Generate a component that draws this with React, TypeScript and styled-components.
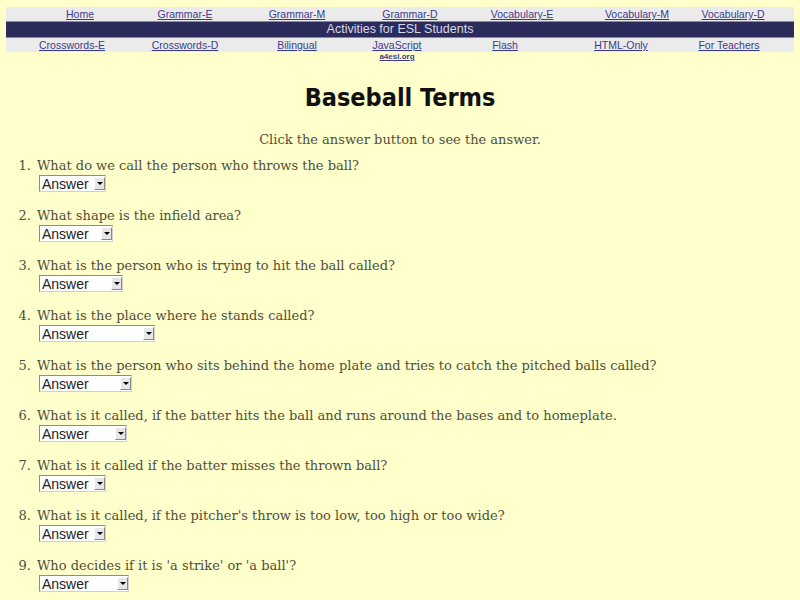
import React from 'react'
import styled, { createGlobalStyle } from 'styled-components'

const GlobalStyle = createGlobalStyle`
  html, body {
    margin: 0;
    padding: 0;
    background: #ffffcc;
  }
  body {
    font-family: 'Liberation Sans', Arial, sans-serif;
  }
`

const Page = styled.div`
  width: 800px;
  height: 600px;
  overflow: hidden;
  background: #ffffcc;
  padding: 7px 6px 0;
  box-sizing: border-box;
`

const NavTable = styled.div`
  display: flex;
  flex-direction: column;
`

const LinkRow = styled.div<{ $cols: string }>`
  display: grid;
  grid-template-columns: ${(p) => p.$cols};
  background: #ebebeb;
  height: 14px;
  align-items: center;
`

const NavCell = styled.div`
  display: flex;
  justify-content: center;
  min-width: 0;
  white-space: nowrap;
`

const NavLink = styled.a`
  font-size: 10.5px;
  color: #3b3b8c;
  text-decoration: underline;
  line-height: 14px;
`

const Banner = styled.div`
  background: #2c2c5c;
  color: #d8d8e8;
  height: 15px;
  font-size: 12.5px;
  line-height: 15px;
  text-align: center;
  border-top: 1px solid #8a8aa8;
  border-bottom: 1px solid #8a8aa8;
`

const SubLink = styled.div<{ $cols: string }>`
  display: grid;
  grid-template-columns: ${(p) => p.$cols};
  height: 10px;
`

const SmallLink = styled.a`
  grid-column: 4;
  text-align: center;
  font-size: 8px;
  font-weight: bold;
  color: #3b3b8c;
  text-decoration: underline;
  line-height: 10px;
`

const Title = styled.h1`
  margin: 21px 0 0;
  text-align: center;
  font-family: 'DejaVu Sans Condensed', 'DejaVu Sans', sans-serif;
  font-weight: bold;
  font-size: 25px;
  color: #111;
  line-height: 30px;
`

const Intro = styled.p`
  margin: 19px 0 0;
  text-align: center;
  font-family: 'DejaVu Serif', serif;
  font-size: 13px;
  color: #4f4f3c;
  line-height: 16px;
`

const Questions = styled.div`
  margin-top: 9px;
  display: flex;
  flex-direction: column;
  gap: 15px;
  font-family: 'DejaVu Serif', serif;
  font-size: 13px;
  color: #4f4f3c;
`

const Item = styled.div`
  display: flex;
  line-height: 17px;
`

const Num = styled.span`
  width: 25px;
  flex: none;
  text-align: right;
  padding-right: 6px;
`

const Body = styled.div`
  display: flex;
  flex-direction: column;
  align-items: flex-start;
`

const SelectWrap = styled.span<{ $w: number }>`
  position: relative;
  display: inline-block;
  width: ${(p) => p.$w}px;
  height: 17px;
  margin-top: 1px;
  margin-left: 2px;
`

const Select = styled.select`
  appearance: none;
  -webkit-appearance: none;
  width: 100%;
  height: 100%;
  box-sizing: border-box;
  border: 1px solid #8c8c8c;
  border-right-color: #d0d0d0;
  border-bottom-color: #d0d0d0;
  background: #fff;
  font-family: 'Liberation Sans', Arial, sans-serif;
  font-size: 14px;
  color: #222;
  padding: 0 0 0 2px;
  margin: 0;
  border-radius: 0;
  outline: none;
`

const Arrow = styled.span`
  position: absolute;
  right: 1px;
  top: 2px;
  width: 11px;
  height: 13px;
  background: #e6e6e6;
  border: 1px solid #fff;
  border-right-color: #888;
  border-bottom-color: #888;
  box-sizing: border-box;
  display: flex;
  align-items: center;
  justify-content: center;
  pointer-events: none;

  &::after {
    content: '';
    border-left: 3px solid transparent;
    border-right: 3px solid transparent;
    border-top: 3px solid #000;
  }
`

const topCols = '148px 62px 162px 64px 160px 70px 122px'
const bottomCols = '132px 94px 130px 70px 146px 86px 130px'

const topLinks = ['Home', 'Grammar-E', 'Grammar-M', 'Grammar-D', 'Vocabulary-E', 'Vocabulary-M', 'Vocabulary-D']
const bottomLinks = ['Crosswords-E', 'Crosswords-D', 'Bilingual', 'JavaScript', 'Flash', 'HTML-Only', 'For Teachers']

const questions = [
  { q: 'What do we call the person who throws the ball?', w: 67 },
  { q: 'What shape is the infield area?', w: 74 },
  { q: 'What is the person who is trying to hit the ball called?', w: 84 },
  { q: 'What is the place where he stands called?', w: 116 },
  { q: 'What is the person who sits behind the home plate and tries to catch the pitched balls called?', w: 93 },
  { q: 'What is it called, if the batter hits the ball and runs around the bases and to homeplate.', w: 88 },
  { q: 'What is it called if the batter misses the thrown ball?', w: 67 },
  { q: "What is it called, if the pitcher's throw is too low, too high or too wide?", w: 67 },
  { q: "Who decides if it is 'a strike' or 'a ball'?", w: 90 },
]

const App: React.FC = () => {
  return (
    <>
      <GlobalStyle />
      <Page>
        <NavTable>
          <LinkRow $cols={topCols}>
            {topLinks.map((l) => (
              <NavCell key={l}>
                <NavLink href='#'>{l}</NavLink>
              </NavCell>
            ))}
          </LinkRow>
          <Banner>Activities for ESL Students</Banner>
          <LinkRow $cols={bottomCols}>
            {bottomLinks.map((l) => (
              <NavCell key={l}>
                <NavLink href='#'>{l}</NavLink>
              </NavCell>
            ))}
          </LinkRow>
          <SubLink $cols={bottomCols}>
            <SmallLink href='#'>a4esl.org</SmallLink>
          </SubLink>
        </NavTable>

        <Title>Baseball Terms</Title>
        <Intro>Click the answer button to see the answer.</Intro>

        <Questions>
          {questions.map((item, i) => (
            <Item key={item.q}>
              <Num>{i + 1}.</Num>
              <Body>
                {item.q}
                <SelectWrap $w={item.w}>
                  <Select defaultValue='a'>
                    <option value='a'>Answer</option>
                  </Select>
                  <Arrow />
                </SelectWrap>
              </Body>
            </Item>
          ))}
        </Questions>
      </Page>
    </>
  )
}

export default App
